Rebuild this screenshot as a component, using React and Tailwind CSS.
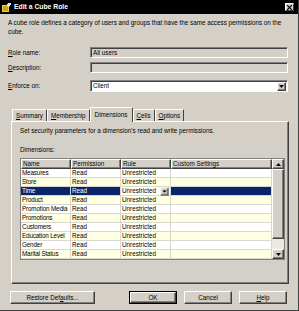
import React from "react";

const raised =
  "border border-t-white border-l-white border-r-[#404040] border-b-[#404040] shadow-[inset_-1px_-1px_0_#808080]";
const sunken =
  "border border-t-[#808080] border-l-[#808080] border-r-white border-b-white shadow-[inset_1px_1px_0_#404040]";

const rows = [
  "Measures",
  "Store",
  "Time",
  "Product",
  "Promotion Media",
  "Promotions",
  "Customers",
  "Education Level",
  "Gender",
  "Marital Status",
];

function U({ children }) {
  return <span className="underline underline-offset-1">{children}</span>;
}

function Field({ label, children }) {
  return (
    <div className="flex items-center">
      <div className="w-[82px]">{label}</div>
      {children}
    </div>
  );
}

function ArrowBtn({ up }) {
  return (
    <div className={`w-[9px] h-[9px] bg-[#d4d0c8] flex items-center justify-center ${raised}`}>
      <svg width="5" height="3" viewBox="0 0 5 3">
        <path d={up ? "M2.5 0L5 3H0z" : "M0 0h5L2.5 3z"} fill="#000" />
      </svg>
    </div>
  );
}

function Tab({ children, active }) {
  return (
    <div
      className={`px-[3px] flex items-center bg-[#d4d0c8] border-t border-l border-t-white border-l-white border-r border-r-[#404040] rounded-t-[1px] ${
        active ? "h-[15px] -mb-px z-10 relative px-[4px]" : "h-[12px] mt-[3px]"
      }`}
    >
      {children}
    </div>
  );
}

export default function App() {
  return (
    <div
      className="w-[299px] h-[311px] bg-[#d4d0c8] overflow-hidden text-[6.3px] text-black flex flex-col border-r border-b border-r-[#404040] border-b-[#404040]"
      style={{ fontFamily: '"Liberation Sans", Arial, sans-serif' }}
    >
      {/* title bar */}
      <div className="h-[14px] bg-black flex items-center px-[2px] shrink-0">
        <svg width="9" height="9" viewBox="0 0 9 9">
          <rect x="0" y="2" width="7" height="7" fill="#f2d22e" />
          <rect x="1" y="3" width="5" height="5" fill="#c9a40c" />
          <path d="M5 1l3-1v3l-2 1z" fill="#ffffff" />
          <path d="M6 0h3v2H6z" fill="#e0e0e0" />
        </svg>
        <span className="ml-[3px] text-white font-bold text-[6.8px]">Edit a Cube Role</span>
        <div className="ml-auto mr-[2px] w-[9px] h-[8px] bg-[#d4d0c8] flex items-center justify-center border border-t-white border-l-white border-r-[#404040] border-b-[#404040]">
          <svg width="5" height="5" viewBox="0 0 5 5">
            <path d="M0 0l5 5M5 0L0 5" stroke="#000" strokeWidth="1.2" />
          </svg>
        </div>
      </div>

      <div className="px-[8px] flex flex-col">
        <p className="mt-[4px] leading-[9px] w-[276px]">
          A cube role defines a category of users and groups that have the same access permissions on the cube.
        </p>

        <div className="mt-[11px] flex flex-col">
          <Field label={<><U>R</U>ole name:</>}>
            <div className={`w-[198px] h-[11px] bg-[#d4d0c8] flex items-center px-[2px] ${sunken}`}>All users</div>
          </Field>
          <div className="mt-[4px]">
            <Field label={<><U>D</U>escription:</>}>
              <div className={`w-[198px] h-[11px] bg-[#d4d0c8] ${sunken}`} />
            </Field>
          </div>
          <div className="mt-[7px]">
            <Field label={<><U>E</U>nforce on:</>}>
              <div className={`w-[198px] h-[12px] bg-white flex items-center pl-[2px] pr-[1px] ${sunken}`}>
                <span>Client</span>
                <div className="ml-auto">
                  <ArrowBtn />
                </div>
              </div>
            </Field>
          </div>
        </div>

        {/* tabs */}
        <div className="mt-[14px] ml-[4px] flex items-end h-[15px]">
          <Tab><U>S</U>ummary</Tab>
          <Tab><U>M</U>embership</Tab>
          <Tab active>Dimensions</Tab>
          <Tab><U>C</U>ells</Tab>
          <Tab><U>O</U>ptions</Tab>
        </div>

        <div className={`ml-[3px] w-[278px] h-[163px] bg-[#d4d0c8] pl-[8px] ${raised}`}>
          <p className="mt-[5px] leading-[8px]">Set security parameters for a dimension's read and write permissions.</p>
          <p className="mt-[11px] leading-[8px]">Dimensions:</p>

          <div className="mt-[4px] w-[265px] flex border border-[#808080] bg-white">
            <div className="flex-1">
              <div className="flex h-[10px]">
                {[
                  ["Name", "w-[50px]"],
                  ["Permission", "w-[50px]"],
                  ["Rule", "w-[50px]"],
                  ["Custom Settings", "flex-1"],
                ].map(([h, w]) => (
                  <div key={h} className={`${w} bg-[#d4d0c8] flex items-center px-[1px] ${raised}`}>
                    {h}
                  </div>
                ))}
              </div>
              {rows.map((r, i) => {
                const sel = i === 2;
                const bg = i % 2 ? "bg-[#ffffe1]" : "bg-white";
                const cell = `h-[9px] flex items-center px-[1px] border-r border-b border-[#d8d8d0]`;
                return (
                  <div key={r} className={`flex ${sel ? "bg-[#0a246a] text-white" : bg}`}>
                    <div className={`w-[50px] whitespace-nowrap overflow-hidden tracking-[-0.15px] ${cell}`}>{r}</div>
                    <div className={`w-[50px] ${cell}`}>Read</div>
                    <div className={`w-[50px] ${cell} ${sel ? "bg-white text-black pr-[1px]" : ""}`}>
                      <span>Unrestricted</span>
                      {sel && (
                        <div className="ml-auto scale-90">
                          <ArrowBtn />
                        </div>
                      )}
                    </div>
                    <div className={`flex-1 ${cell}`} />
                  </div>
                );
              })}
            </div>
            <div className="w-[12px] bg-[#ebe9e3] flex flex-col">
              <div className={`h-[10px] bg-[#d4d0c8] flex items-center justify-center ${raised}`}>
                <svg width="5" height="3" viewBox="0 0 5 3"><path d="M2.5 0L5 3H0z" fill="#000" /></svg>
              </div>
              <div className={`h-[70px] bg-[#d4d0c8] ${raised}`} />
              <div className="flex-1" />
              <div className={`h-[10px] bg-[#d4d0c8] flex items-center justify-center ${raised}`}>
                <svg width="5" height="3" viewBox="0 0 5 3"><path d="M0 0h5L2.5 3z" fill="#000" /></svg>
              </div>
            </div>
          </div>
        </div>

        {/* buttons */}
        <div className="mt-[7px] flex items-center ml-[2px]">
          <div className={`w-[85px] h-[13px] flex items-center justify-center ${raised}`}>
            Restore Def<U>a</U>ults...
          </div>
          <div className="ml-auto flex gap-[7px] mr-[3px]">
            <div className="w-[48px] h-[13px] border border-black">
              <div className={`h-full flex items-center justify-center ${raised}`}>OK</div>
            </div>
            <div className={`w-[48px] h-[13px] flex items-center justify-center ${raised}`}>Cancel</div>
            <div className={`w-[48px] h-[13px] flex items-center justify-center ${raised}`}>
              <U>H</U>elp
            </div>
          </div>
        </div>
      </div>
    </div>
  );
}
